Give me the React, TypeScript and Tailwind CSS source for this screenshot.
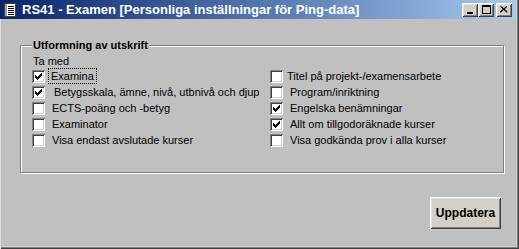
import React from 'react';

const font = { fontFamily: '"Liberation Sans", Arial, sans-serif' };

interface Option {
  label: string;
  checked: boolean;
  textClass: string;
  focused?: boolean;
}

const leftOptions: Option[] = [
  { label: 'Examina', checked: true, textClass: 'ml-[3px]', focused: true },
  { label: 'Betygsskala, ämne, nivå, utbnivå och djup', checked: true, textClass: 'ml-[9px]' },
  { label: 'ECTS-poäng och -betyg', checked: false, textClass: 'ml-[7px]' },
  { label: 'Examinator', checked: false, textClass: 'ml-[7px]' },
  { label: 'Visa endast avslutade kurser', checked: false, textClass: 'ml-[7px]' },
];

const rightOptions: Option[] = [
  { label: 'Titel på projekt-/examensarbete', checked: false, textClass: 'ml-[4px]' },
  { label: 'Program/inriktning', checked: false, textClass: 'ml-[7px]' },
  { label: 'Engelska benämningar', checked: true, textClass: 'ml-[7px]' },
  { label: 'Allt om tillgodoräknade kurser', checked: true, textClass: 'ml-[7px]' },
  { label: 'Visa godkända prov i alla kurser', checked: false, textClass: 'ml-[7px]' },
];

const raised =
  'shadow-[inset_1px_1px_0_#ffffff,inset_-1px_-1px_0_#404040,inset_2px_2px_0_#dfdfdf,inset_-2px_-2px_0_#808080]';

const CheckBox = ({ checked }: { checked: boolean }) => (
  <div className="w-[13px] h-[13px] shrink-0 bg-white flex items-center justify-center shadow-[inset_1px_1px_0_#808080,inset_-1px_-1px_0_#ffffff,inset_2px_2px_0_#404040,inset_-2px_-2px_0_#d4d0c8]">
    {checked && (
      <svg width="7" height="7" viewBox="0 0 7 7">
        <path d="M0 2h1v1h1v1h1v-1h1v-1h1v-1h1v-1h1v3h-1v1h-1v1h-1v1h-1v1h-1v-1h-1v-1h-1z" fill="#000" />
      </svg>
    )}
  </div>
);

const OptionRow = ({ option }: { option: Option }) => (
  <div className="h-[16px] flex items-center">
    <CheckBox checked={option.checked} />
    {option.focused ? (
      <span className={`${option.textClass} px-[2px] leading-[14px] border border-dotted border-black`}>
        {option.label}
      </span>
    ) : (
      <span className={`${option.textClass} leading-[14px]`}>{option.label}</span>
    )}
  </div>
);

const TitleIcon = () => (
  <svg width="16" height="16" viewBox="0 0 16 16">
    <rect x="2.5" y="1.5" width="11" height="13" fill="#ffffff" stroke="#404040" />
    <rect x="3" y="2" width="2" height="12" fill="#a0a0a0" />
    <path d="M6 4.5h6M6 6.5h6M6 8.5h6M6 10.5h6M6 12.5h6" stroke="#000" strokeWidth="1" />
  </svg>
);

const WinButton = ({ children, className = '' }: { children: React.ReactNode; className?: string }) => (
  <div className={`w-[16px] h-[14px] bg-[#d4d0c8] flex items-center justify-center ${raised} ${className}`}>
    {children}
  </div>
);

export default function App() {
  return (
    <div
      className="w-[519px] h-[249px] bg-[#c0c0c0] flex flex-col text-[11px] text-black overflow-hidden shadow-[inset_1px_0_0_#dfdfdf,inset_-1px_-1px_0_#404040,inset_-2px_-2px_0_#808080,inset_-3px_-3px_0_#d4d0c8]"
      style={font}
    >
      {/* Title bar */}
      <div className="h-[19px] mr-[3px] flex items-center pl-[2px] pr-[4px] bg-gradient-to-r from-[#0a246a] to-[#a6caf0]">
        <TitleIcon />
        <span className="ml-[4px] text-white font-bold text-[13px] leading-none whitespace-nowrap">
          RS41 - Examen [Personliga inställningar för Ping-data]
        </span>
        <div className="ml-auto flex items-center">
          <WinButton>
            <div className="w-[6px] h-[2px] bg-black mt-[6px] -ml-[1px]" />
          </WinButton>
          <WinButton>
            <div className="w-[9px] h-[9px] border border-black border-t-2" />
          </WinButton>
          <WinButton className="ml-[2px]">
            <svg width="8" height="7" viewBox="0 0 8 7">
              <path d="M0.5 0.5L7 6.5M1.5 0.5L7.5 6M7 0.5L0.5 6.5M6.5 0.5L0 6" stroke="#000" strokeWidth="1" />
            </svg>
          </WinButton>
        </div>
      </div>

      {/* Group box */}
      <div className="relative mt-[26px] ml-[20px] w-[484px] h-[128px] border border-[#808080] shadow-[inset_1px_1px_0_#ffffff,1px_1px_0_#ffffff] pl-[11px] pt-[8px]">
        <span className="absolute -top-[8px] left-[11px] px-[1px] bg-[#c0c0c0] font-bold text-[11px] leading-[14px]">
          Utformning av utskrift
        </span>
        <div className="leading-[14px] ml-[1px]">Ta med</div>
        <div className="grid grid-cols-[238px_1fr]">
          <div className="flex flex-col">
            {leftOptions.map((o) => (
              <OptionRow key={o.label} option={o} />
            ))}
          </div>
          <div className="flex flex-col">
            {rightOptions.map((o) => (
              <OptionRow key={o.label} option={o} />
            ))}
          </div>
        </div>
      </div>

      {/* Update button */}
      <div className="flex justify-end mr-[18px] mt-[24px]">
        <button
          className={`w-[71px] h-[32px] bg-[#d4d0c8] font-bold text-[12px] ${raised}`}
          style={font}
        >
          Uppdatera
        </button>
      </div>
    </div>
  );
}
